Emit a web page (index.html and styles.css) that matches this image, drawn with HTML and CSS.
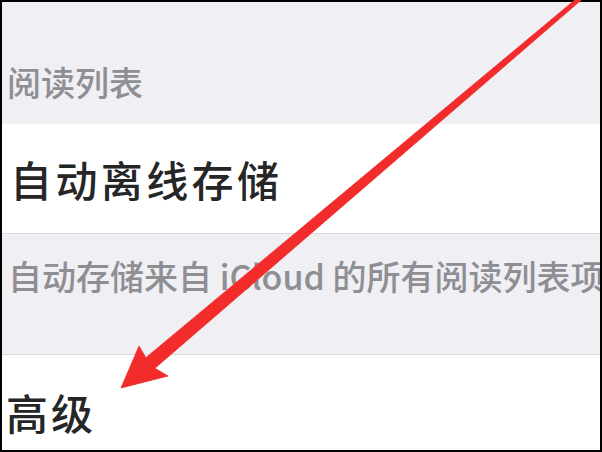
FILE: index.html
```html
<!DOCTYPE html>
<html lang="zh-CN">
<head>
<meta charset="utf-8">
<title>阅读列表</title>
<link rel="stylesheet" href="styles.css">
</head>
<body>
<div class="frame">
  <div class="group-header">阅读列表</div>
  <div class="cell cell-first"><span class="cell-label">自动离线存储</span></div>
  <div class="group-footer">自动存储来自 iCloud 的所有阅读列表项目，以便离线阅读。</div>
  <div class="cell cell-last"><span class="cell-label label-tight">高级</span></div>
</div>
<svg class="annotation" viewBox="0 0 602 452" width="602" height="452" aria-hidden="true">
  <polygon class="arrow" points="582.6,-6.5 145.9,357.7 139,346 121,388 168,376 154.9,368.3 585.3,-3.5"/>
</svg>
</body>
</html>
```

FILE: styles.css
```css
html, body {
  margin: 0;
  padding: 0;
  background: #000;
}

body {
  width: 602px;
  height: 452px;
  position: relative;
  overflow: hidden;
  font-family: "Noto Sans CJK SC", "Noto Sans", sans-serif;
}

.frame {
  box-sizing: border-box;
  width: 602px;
  height: 452px;
  border: 2px solid #000;
  background: #efeff4;
  display: flex;
  flex-direction: column;
  overflow: hidden;
}

.group-header {
  box-sizing: border-box;
  height: 122px;
  padding: 60px 0 0 5px;
  font-size: 34px;
  line-height: 40px;
  font-weight: 500;
  color: #8e8e93;
  flex: none;
}

.cell {
  background: #fff;
  flex: none;
  box-sizing: border-box;
  padding-left: 8px;
}

.cell-first {
  height: 110px;
  display: flex;
  align-items: center;
  border-bottom: 1px solid #d9d9de;
}

.cell-last {
  flex: 1;
  padding-top: 32px;
  padding-left: 4px;
  border-top: 1px solid #d9d9de;
}

.cell-label {
  font-size: 42px;
  line-height: 50px;
  letter-spacing: 3.4px;
  font-weight: 500;
  color: #262626;
}

.label-tight {
  letter-spacing: 3px;
}

.group-footer {
  box-sizing: border-box;
  height: 120px;
  flex: none;
  padding: 22px 0 0 6px;
  font-size: 34px;
  line-height: 40px;
  font-weight: 500;
  color: #8e8e93;
  white-space: nowrap;
  overflow: hidden;
}

.annotation {
  position: absolute;
  top: 0;
  left: 0;
  pointer-events: none;
}

.arrow {
  fill: #f22b2b;
  stroke: #f22b2b;
  stroke-width: 0.8;
  stroke-linejoin: round;
}
```
